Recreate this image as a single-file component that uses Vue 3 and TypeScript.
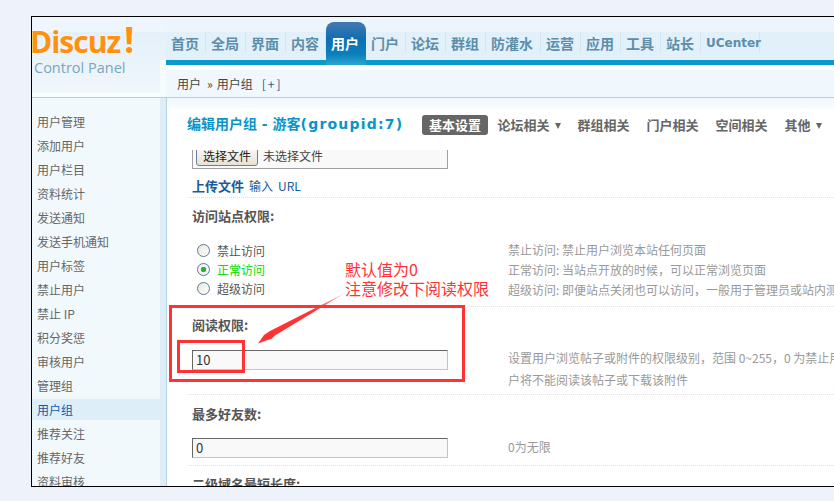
<template>
  <div class="frame">
    <header class="header">
      <div class="logo">
        <div class="logo-name">Discuz<span class="bang">!</span></div>
        <div class="logo-sub">Control Panel</div>
      </div>
      <div class="top">
        <nav class="nav">
          <a
            v-for="item in navItems"
            :key="item"
            :class="['nav-item', { active: item === '用户', latin: item === 'UCenter' }]"
          >{{ item }}</a>
        </nav>
        <div class="crumb">
          <span>用户</span>
          <span class="crumb-sep">»</span>
          <span>用户组</span>
          <span class="crumb-add">[+]</span>
        </div>
      </div>
    </header>

    <div class="body">
      <aside class="side">
        <ul class="menu">
          <li v-for="item in menuItems" :key="item" :class="{ current: item === '用户组' }">{{ item }}</li>
        </ul>
      </aside>

      <main class="main">
        <div class="title-row">
          <h1 class="title">编辑用户组 - 游客<span class="title-id">(groupid:7)</span></h1>
          <div class="tabs">
            <a v-for="tab in tabs" :key="tab.name" :class="['tab', { on: tab.on }]">
              {{ tab.name }}<i v-if="tab.more" class="caret"></i>
            </a>
          </div>
        </div>

        <div class="form">
          <section class="row row-file">
            <div class="file-box">
              <button class="file-btn">选择文件</button>
              <span class="file-none">未选择文件</span>
            </div>
            <div class="file-links"><b>上传文件</b><span>输入</span><span>URL</span></div>
          </section>

          <section class="row row-access">
            <div class="label">访问站点权限:</div>
            <div class="cols">
              <div class="radios">
                <div v-for="r in radios" :key="r.name" :class="['radio', { checked: r.checked }]">
                  <i class="dot"></i>{{ r.name }}
                </div>
              </div>
              <div class="help help-radio">
                <p v-for="r in radios" :key="r.name">{{ r.help }}</p>
              </div>
            </div>
          </section>

          <section class="row row-read">
            <div class="label">阅读权限:</div>
            <div class="cols">
              <div class="input">10</div>
              <div class="help help-read">
                <p>设置用户浏览帖子或附件的权限级别，范围 0~255，0 为禁止用户浏览任何帖子或附件。当用户的阅读权限小于帖子的阅读权限许可时，用</p>
                <p>户将不能阅读该帖子或下载该附件</p>
              </div>
            </div>
          </section>

          <section class="row row-friends">
            <div class="label">最多好友数:</div>
            <div class="cols">
              <div class="input">0</div>
              <div class="help help-friends"><p>0为无限</p></div>
            </div>
          </section>

          <section class="row row-domain">
            <div class="label">二级域名最短长度:</div>
          </section>
        </div>
      </main>
    </div>

    <!-- annotations drawn on top of the screenshot -->
    <div class="note-box"></div>
    <div class="note-input"></div>
    <div class="note-text">默认值为0<br />注意修改下阅读权限</div>
    <svg class="note-arrow" width="100" height="60" viewBox="0 0 100 60">
      <defs>
        <linearGradient id="arrow-fade" x1="1" y1="0" x2="0" y2="1">
          <stop offset="0" stop-color="#ff3333" stop-opacity="0.25" />
          <stop offset="0.35" stop-color="#ff3333" />
        </linearGradient>
      </defs>
      <polygon points="89,1 19,43.5 16,46.5 2,51.5 8,43 14,39" fill="url(#arrow-fade)" />
    </svg>
  </div>
</template>

<script setup lang="ts">
const navItems = ['首页', '全局', '界面', '内容', '用户', '门户', '论坛', '群组', '防灌水', '运营', '应用', '工具', '站长', 'UCenter']

const menuItems = [
  '用户管理', '添加用户', '用户栏目', '资料统计', '发送通知', '发送手机通知', '用户标签', '禁止用户',
  '禁止 IP', '积分奖惩', '审核用户', '管理组', '用户组', '推荐关注', '推荐好友', '资料审核'
]

const tabs = [
  { name: '基本设置', on: true, more: false },
  { name: '论坛相关', on: false, more: true },
  { name: '群组相关', on: false, more: false },
  { name: '门户相关', on: false, more: false },
  { name: '空间相关', on: false, more: false },
  { name: '其他', on: false, more: true }
]

const radios = [
  { name: '禁止访问', checked: false, help: '禁止访问: 禁止用户浏览本站任何页面' },
  { name: '正常访问', checked: true, help: '正常访问: 当站点开放的时候，可以正常浏览页面' },
  { name: '超级访问', checked: false, help: '超级访问: 即便站点关闭也可以访问，一般用于管理员或站内测试' }
]
</script>

<style>
html,
body {
  margin: 0;
  height: 100%;
  overflow: hidden;
  background: #edf2fb;
}
</style>

<style scoped>
.frame {
  position: relative;
  box-sizing: border-box;
  width: 803px;
  height: 471px;
  margin: 16px 0 0 31px;
  border: 1px solid #000;
  border-width: 1px 0 1px 1px;
  overflow: hidden;
  display: flex;
  flex-direction: column;
  background: #fff;
  font: 12px/1.5 "Noto Sans CJK SC", "Liberation Sans", sans-serif;
  color: #555;
}

.header {
  display: flex;
  flex: none;
  height: 81px;
  box-sizing: border-box;
  border-bottom: 1px solid #b4d0dc;
}

.logo {
  flex: none;
  width: 134px;
  overflow: hidden;
  background:
    linear-gradient(#f6fbfe, #f6fbfe) right bottom / 6px 37px no-repeat,
    linear-gradient(#eef5fc 0 15px, #e4f0f9 15px, #f0f7fc 76px, #fbfdff 76px);
}

.logo-name {
  margin: 7px 0 0 -2px;
  font: bold 30px/36px "Open Sans", sans-serif;
  letter-spacing: -1px;
  color: #ff9010;
  white-space: nowrap;
  text-shadow: 0 0 3px #fff;
}

.bang {
  display: inline-block;
  margin-left: 4px;
  font-size: 36px;
  line-height: 0;
}

.logo-sub {
  margin: -2px 0 0 2px;
  font: 14.5px/20px "Open Sans", sans-serif;
  color: #78a6bd;
  white-space: nowrap;
}

.top {
  flex: 1;
  min-width: 0;
  background: linear-gradient(#fff 0 53px, #f0f8fd 53px);
}

.nav {
  display: flex;
  height: 48px;
  box-sizing: border-box;
  padding-top: 5px;
  background: linear-gradient(#edf5fc 0 15px, #e2f0f9 15px 43px, #0a99cc 43px);
}

.nav-item {
  box-sizing: border-box;
  width: 40px;
  height: 20px;
  margin-top: 11px;
  padding: 0 5px;
  border-right: 1px solid #d3e5ef;
  font-weight: 700;
  font-size: 14px;
  line-height: 20px;
  color: #5c8eaa;
  white-space: nowrap;
}

.nav-item:nth-child(9) {
  width: 55px;
}

.nav-item.latin {
  width: 59px;
  font: bold 12px/20px "DejaVu Sans", sans-serif;
}

.nav-item.active {
  height: 43px;
  margin-top: 0;
  padding-top: 11px;
  border-right: 0;
  border-radius: 8px 8px 0 0;
  background: linear-gradient(#4479b1, #0f6db2 40%, #0b80bb 75%, #2aa5d3);
  color: #fff;
}

.crumb {
  display: flex;
  margin-top: 5px;
  padding-left: 11px;
  line-height: 27px;
  color: #444;
}

.crumb-sep {
  margin: 0 4px 0 6px;
}

.crumb-add {
  margin-left: 9px;
  letter-spacing: 2px;
  color: #1a5a9c;
}

.body {
  flex: 1;
  display: flex;
  min-height: 0;
}

.side {
  flex: none;
  width: 128px;
  border-right: 6px solid #deeef9;
  background: #f2f9fd;
}

.menu {
  list-style: none;
  margin: 0;
  padding: 13px 0 0;
}

.menu li {
  height: 21px;
  margin-bottom: 3px;
  padding-left: 5px;
  line-height: 21px;
  color: #666;
  white-space: nowrap;
}

.menu li.current {
  background: #deeef9;
  color: #0f5aa8;
}

.main {
  flex: 1;
  min-width: 0;
  display: flex;
  flex-direction: column;
  border-left: 1px solid #b9d3e2;
  background: linear-gradient(#eef6fc, #fff 14px);
}

.title-row {
  flex: none;
  display: flex;
  align-items: center;
  height: 52px;
  padding-left: 20px;
  white-space: nowrap;
}

.title {
  flex: none;
  width: 235px;
  margin: 0;
  font: bold 14px/20px "DejaVu Sans", "Noto Sans CJK SC", sans-serif;
  color: #0a94c9;
}

.title-id {
  letter-spacing: 1.2px;
}

.tabs {
  display: flex;
  margin-top: 1px;
}

.tab {
  display: block;
  height: 20px;
  padding: 0 8.5px;
  font-size: 13px;
  font-weight: 700;
  line-height: 20px;
  color: #666;
}

.tab.on {
  width: 52px;
  margin-right: 1px;
  padding: 0 7px;
  border-radius: 3px;
  background: #666;
  color: #fff;
}

.caret {
  display: inline-block;
  margin-left: 5px;
  border: 3.5px solid transparent;
  border-top: 6px solid #666;
  border-bottom: 0;
  vertical-align: 1px;
}

.form {
  flex: 1;
  min-height: 0;
  overflow: hidden;
  padding-left: 20px;
}

.row {
  box-sizing: border-box;
  padding-left: 5px;
  border-bottom: 1px dotted #d3e5f1;
}

.row-file {
  height: 58px;
  margin-top: -10px;
}

.row-access {
  height: 109px;
  padding-top: 9px;
}

.row-read {
  height: 88px;
  padding-top: 9px;
}

.row-friends {
  height: 71px;
  padding-top: 10px;
}

.row-domain {
  padding-top: 9px;
}

.file-box {
  box-sizing: border-box;
  width: 256px;
  height: 29px;
  padding: 3px 0 0 3px;
  border: 1px solid #a0a0a0;
  background: #f9f9f9;
  line-height: 22px;
  white-space: nowrap;
}

.file-btn {
  box-sizing: border-box;
  width: 62px;
  height: 22px;
  padding: 0;
  margin-right: 5px;
  border: 1px solid #6d7f96;
  border-radius: 3px;
  background: linear-gradient(#fdfdfb, #e6e2d6);
  font: 12px "Noto Sans CJK SC", sans-serif;
  color: #222;
}

.file-none {
  color: #444;
}

.file-links {
  display: flex;
  gap: 5px;
  margin-top: 8px;
  line-height: 18px;
  color: #1a5a9c;
}

.file-links b {
  font-size: 13px;
}

.label {
  height: 18px;
  font-size: 13px;
  font-weight: 700;
  line-height: 18px;
  color: #555;
}

.cols {
  display: flex;
  white-space: nowrap;
}

.row-access .cols {
  margin-top: 16px;
}

.row-read .cols {
  margin-top: 16px;
}

.row-friends .cols {
  margin-top: 15px;
}

.radios {
  width: 316px;
  flex: none;
}

.radio {
  display: flex;
  align-items: center;
  height: 19px;
  padding-left: 5px;
  color: #555;
}

.radio.checked {
  color: #00dd00;
}

.dot {
  box-sizing: border-box;
  width: 13px;
  height: 13px;
  margin-right: 7px;
  border: 1px solid #5a7a9a;
  border-radius: 50%;
  background: linear-gradient(135deg, #e6e6e0, #fff);
}

.radio.checked .dot {
  background: radial-gradient(circle, #2fae2f 0 2.5px, #f3f3ee 3px);
}

.input {
  flex: none;
  box-sizing: border-box;
  width: 256px;
  height: 20px;
  padding-left: 3px;
  border: 1px solid;
  border-color: #666 #c4c4c4 #c4c4c4 #666;
  background: #f9f9f9;
  font-size: 13px;
  line-height: 18px;
  color: #333;
}

.help {
  margin-left: 60px;
  color: #999;
}

.help p {
  margin: 0;
}

.help-radio {
  margin: -1px 0 0;
  line-height: 20px;
}

.help-read {
  margin-top: -3px;
  line-height: 22px;
}

.help-friends {
  margin-top: -1px;
  line-height: 20px;
}

.note-box {
  position: absolute;
  left: 137px;
  top: 288px;
  box-sizing: border-box;
  width: 296px;
  height: 77px;
  border: 3px solid #ff3333;
}

.note-input {
  position: absolute;
  left: 145px;
  top: 323px;
  box-sizing: border-box;
  width: 68px;
  height: 33px;
  border: 3px solid #ff3333;
}

.note-text {
  position: absolute;
  left: 313px;
  top: 243px;
  font-size: 16px;
  line-height: 19px;
  color: #ff3333;
  white-space: nowrap;
}

.note-arrow {
  position: absolute;
  left: 224px;
  top: 275px;
}
</style>
